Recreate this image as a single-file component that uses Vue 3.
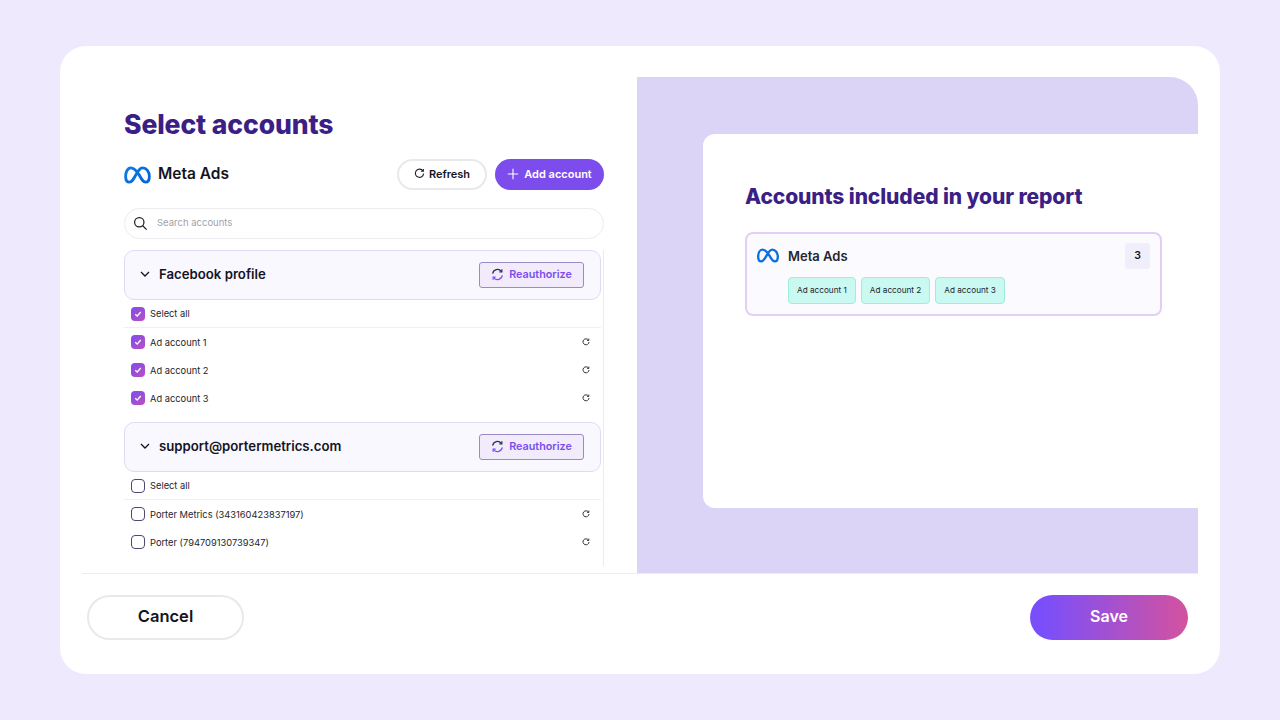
<template>
  <div class="page">
    <div class="modal">
      <div class="main">
        <section class="left">
          <h1 class="title">Select accounts</h1>
          <div class="source-row">
            <div class="source">
              <svg class="meta-logo" viewBox="0 0 28 19" width="27" height="18">
                <defs>
                  <linearGradient id="metaGrad" x1="0" y1="0" x2="1" y2="0.6">
                    <stop offset="0" stop-color="#0a7ae8" />
                    <stop offset="1" stop-color="#0668d8" />
                  </linearGradient>
                </defs>
                <path d="M7 2C3.500 2 1.500 6.500 1.500 11 1.500 14.500 3 17 5.500 17 8 17 9.500 14.500 12.500 9 15 4.500 16.500 2 19.500 2 23.500 2 26.500 6 26.500 11 26.500 14.500 25 17 22.500 17 20 17 18.500 14.500 15.500 9 12.500 4.500 10 2 7 2Z" fill="none" stroke="url(#metaGrad)" stroke-width="3" stroke-linejoin="round" />
              </svg>
              <span class="source-name">Meta Ads</span>
            </div>
            <div class="source-actions">
              <button class="btn-refresh">
                <svg class="reload" viewBox="0 0 12 12" width="11" height="11"><path d="M9.800 3.300A4.500 4.500 0 1 0 10.500 6" /><path d="M10.200 1v2.600H7.600" /></svg>
                Refresh
              </button>
              <button class="btn-add">
                <svg viewBox="0 0 12 12" width="12" height="12"><path d="M6 .8v10.400M.8 6h10.400" /></svg>
                Add account
              </button>
            </div>
          </div>
          <div class="search">
            <svg viewBox="0 0 16 16" width="15" height="15"><circle cx="6.700" cy="6.700" r="5" /><path d="M10.400 10.400 14.500 14.500" /></svg>
            <span class="search-text">Search accounts</span>
          </div>
          <div class="list">
            <div v-for="group in groups" :key="group.name" class="group">
              <div class="group-head">
                <div class="group-name">
                  <svg viewBox="0 0 10 6" width="10" height="6"><path d="M1 1l4 4 4-4" /></svg>
                  {{ group.name }}
                </div>
                <button class="btn-reauth">
                  <svg viewBox="0 0 14 14" width="13" height="13">
                    <path d="M1.800 6A5.300 5.300 0 0 1 11 3.400" />
                    <path d="M12.200 8A5.300 5.300 0 0 1 3 10.600" class="purple" />
                    <path d="M11.700 1.400v2.800H9" />
                    <path d="M2.300 12.600V9.800H5" class="purple" />
                  </svg>
                  Reauthorize
                </button>
              </div>
              <div class="row row-all">
                <span class="check" :class="{ on: group.checked }">
                  <svg v-if="group.checked" viewBox="0 0 10 10" width="8" height="8"><path d="M1.500 5.200 4 7.500l4.500-5" /></svg>
                </span>
                <span>Select all</span>
              </div>
              <div v-for="acc in group.accounts" :key="acc" class="row">
                <span class="check" :class="{ on: group.checked }">
                  <svg v-if="group.checked" viewBox="0 0 10 10" width="8" height="8"><path d="M1.500 5.200 4 7.500l4.500-5" /></svg>
                </span>
                <span>{{ acc }}</span>
                <svg class="reload small" viewBox="0 0 12 12" width="8" height="8"><path d="M9.800 3.300A4.500 4.500 0 1 0 10.500 6" /><path d="M10.200 1v2.600H7.600" /></svg>
              </div>
            </div>
          </div>
        </section>
        <section class="right">
          <div class="report">
            <h2 class="report-title">Accounts included in your report</h2>
            <div class="included">
              <div class="included-head">
                <div class="source">
                  <svg class="meta-logo" viewBox="0 0 28 19" width="22" height="15">
                    <path d="M7 2C3.500 2 1.500 6.500 1.500 11 1.500 14.500 3 17 5.500 17 8 17 9.500 14.500 12.500 9 15 4.500 16.500 2 19.500 2 23.500 2 26.500 6 26.500 11 26.500 14.500 25 17 22.500 17 20 17 18.500 14.500 15.500 9 12.500 4.500 10 2 7 2Z" fill="none" stroke="#0a6fdf" stroke-width="3" stroke-linejoin="round" />
                  </svg>
                  <span class="included-name">Meta Ads</span>
                </div>
                <span class="count">3</span>
              </div>
              <div class="chips">
                <span v-for="n in 3" :key="n" class="chip">Ad account {{ n }}</span>
              </div>
            </div>
          </div>
        </section>
      </div>
      <footer class="footer">
        <button class="btn-cancel">Cancel</button>
        <button class="btn-save">Save</button>
      </footer>
    </div>
  </div>
</template>

<script setup>
const groups = [
  { name: 'Facebook profile', checked: true, accounts: ['Ad account 1', 'Ad account 2', 'Ad account 3'] },
  { name: 'support@portermetrics.com', checked: false, accounts: ['Porter Metrics (343160423837197)', 'Porter (794709130739347)'] }
];
</script>

<style>
html, body { margin: 0; background: #efe9fe; }
</style>

<style scoped>
.page {
  height: 720px;
  box-sizing: border-box;
  padding: 46px 60px;
  font-family: Inter, "Liberation Sans", sans-serif;
  color: #14141f;
}
.modal {
  height: 628px;
  box-sizing: border-box;
  padding: 31px 22px 0;
  background: #fff;
  border-radius: 26px;
  display: flex;
  flex-direction: column;
}
.main { display: flex; height: 496px; }
.left { width: 555px; box-sizing: border-box; padding: 31px 33px 0 42px; }
.title {
  margin: 0;
  font-size: 26.500px;
  line-height: 32px;
  font-weight: 800;
  letter-spacing: -0.1px;
  color: #3b1f85;
}
.source-row {
  display: flex;
  justify-content: space-between;
  align-items: center;
  margin-top: 19px;
  height: 31px;
}
.source { display: flex; align-items: center; }
.source-name { margin-left: 7px; padding-bottom: 2px; font-size: 15.500px; font-weight: 600; }
.source-actions { display: flex; gap: 8px; }
button { font-family: inherit; cursor: pointer; }
.btn-refresh {
  width: 90px;
  height: 31px;
  background: #fff;
  border: 2px solid #e9e9ec;
  border-radius: 16px;
  font-size: 11px;
  font-weight: 600;
  color: #14141f;
  display: flex;
  align-items: center;
  justify-content: center;
  gap: 4px;
  padding: 0 0 2px;
}
.reload path { fill: none; stroke: #22222c; stroke-width: 1.200; }
.reload.small path { stroke-width: 1.400; }
.btn-add {
  width: 109px;
  height: 31px;
  background: #7c4dec;
  border: none;
  border-radius: 16px;
  color: #fff;
  font-size: 11px;
  font-weight: 600;
  display: flex;
  align-items: center;
  justify-content: center;
  gap: 5px;
  padding: 0 0 2px;
}
.btn-add path { stroke: #fff; stroke-width: 1.100; fill: none; }
.search {
  margin-top: 18px;
  height: 31px;
  box-sizing: border-box;
  border: 1.500px solid #ececf0;
  border-radius: 16px;
  display: flex;
  align-items: center;
  padding-left: 8px;
  gap: 9px;
  font-size: 9.500px;
  color: #a2a2aa;
}
.search-text { padding-bottom: 2px; }
.search svg { fill: none; stroke: #1c1c24; stroke-width: 1.300; }
.list {
  margin-top: 11px;
  height: 316px;
  padding-right: 2px;
  border-right: 1px solid #ececf0;
  box-sizing: border-box;
}
.group { margin-bottom: 10px; }
.group-head {
  height: 50px;
  box-sizing: border-box;
  background: #faf8ff;
  border: 1.500px solid #dfdaf3;
  border-radius: 10px;
  display: flex;
  align-items: center;
  justify-content: space-between;
  padding: 0 16px 0 15px;
}
.group-name {
  display: flex;
  align-items: center;
  gap: 9px;
  padding-bottom: 2px;
  font-size: 13.200px;
  font-weight: 600;
}
.group-name svg { fill: none; stroke: #14141f; stroke-width: 1.300; }
.btn-reauth {
  width: 105px;
  height: 26px;
  background: #f1ebfc;
  border: 1px solid #9a8bc4;
  border-radius: 3px;
  display: flex;
  align-items: center;
  justify-content: center;
  gap: 5px;
  padding: 0 0 1px;
  font-size: 10.800px;
  font-weight: 600;
  color: #7c4dec;
}
.btn-reauth svg path { fill: none; stroke: #2e2a50; stroke-width: 1.300; }
.btn-reauth svg path.purple { stroke: #7c4dec; }
.row {
  height: 28px;
  display: flex;
  align-items: center;
  padding: 0 11px 0 7px;
  font-size: 9.300px;
  font-weight: 400;
  color: #24242c;
  gap: 5px;
}
.row-all {
  border-bottom: 1.500px solid #efeff2;
  box-sizing: border-box;
  height: 27.500px;
  margin-top: .5px;
}
.row .small { margin-left: auto; }
.check {
  width: 14px;
  height: 14px;
  box-sizing: border-box;
  border: 1.200px solid #4e4675;
  border-radius: 4px;
  display: flex;
  align-items: center;
  justify-content: center;
  flex: none;
}
.check.on { background: linear-gradient(135deg, #7c4dec, #bb4fc0); border: none; }
.check svg { fill: none; stroke: #fff; stroke-width: 1.600; }
.right {
  flex: 1;
  background: #dcd4f7;
  border-top-right-radius: 28px;
  padding: 57px 0 65px 66px;
  display: flex;
}
.report {
  flex: 1;
  background: #fff;
  border-radius: 12px 0 0 12px;
  padding: 49px 36px 0 42px;
}
.report-title {
  margin: 0;
  font-size: 21px;
  line-height: 28px;
  font-weight: 800;
  letter-spacing: -0.1px;
  color: #3b1f85;
}
.included {
  margin-top: 21px;
  height: 84px;
  box-sizing: border-box;
  background: #fbfaff;
  border: 2px solid #e3cff5;
  border-radius: 8px;
  padding: 8.500px 10px 0;
}
.included-head { display: flex; justify-content: space-between; align-items: center; }
.included-name { margin-left: 9px; font-size: 13px; font-weight: 600; color: #26262e; }
.count {
  width: 25px;
  height: 26px;
  background: #f1eefb;
  border-radius: 3px;
  display: flex;
  align-items: center;
  justify-content: center;
  font-size: 10.500px;
  font-weight: 600;
}
.chips { display: flex; gap: 5px; margin-top: 8px; margin-left: 31px; }
.chip {
  height: 27px;
  box-sizing: border-box;
  padding: 0 8px;
  display: flex;
  align-items: center;
  background: #c9f9f0;
  border: 1px solid #9eeedc;
  border-radius: 4px;
  font-size: 8.200px;
  font-weight: 400;
  color: #24242c;
  white-space: nowrap;
}
.footer {
  height: 101px;
  box-sizing: border-box;
  border-top: 1.500px solid #ececf0;
  display: flex;
  justify-content: space-between;
  padding: 20.500px 10px 0 5px;
}
.btn-cancel {
  width: 157px;
  height: 45px;
  background: #fff;
  border: 2.500px solid #e9e9ec;
  border-radius: 23px;
  padding: 0 0 2px;
  font-size: 16.500px;
  font-weight: 600;
  color: #14141f;
}
.btn-save {
  width: 158px;
  height: 45px;
  border: none;
  border-radius: 23px;
  padding: 0 0 2px;
  background: linear-gradient(90deg, #7a4ffb 8%, #d4529f 100%);
  font-size: 16px;
  font-weight: 600;
  color: #fff;
}
</style>
